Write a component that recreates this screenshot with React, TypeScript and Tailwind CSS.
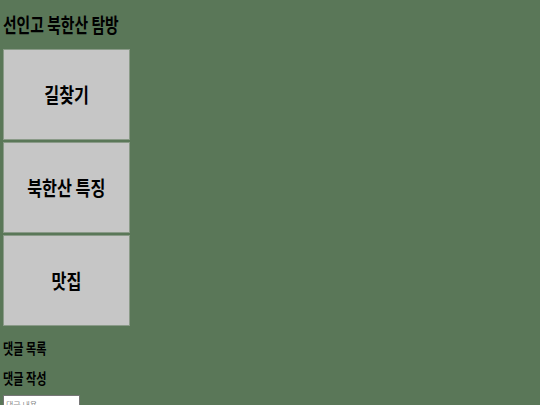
const font = { fontFamily: '"Noto Sans CJK KR", "Noto Sans", sans-serif' }

function MenuBox({ label }: { label: string }) {
  return (
    <div className="w-[127px] h-[91px] flex items-center justify-center bg-[#c6c6c6] border border-[#8a9a88] text-[20px] font-bold text-black">
      <span className="inline-block whitespace-nowrap scale-x-[0.81] origin-center">{label}</span>
    </div>
  )
}

export default function App() {
  return (
    <div className="min-h-[405px] bg-[#5a7758] px-[3px] text-black" style={font}>
      <h1 className="pt-[13px] text-[20px] leading-[24px] font-bold whitespace-nowrap">
        <span className="inline-block scale-x-[0.74] origin-left">선인고 북한산 탐방</span>
      </h1>
      <div className="mt-[12px] flex flex-col gap-[2px]">
        <MenuBox label="길찾기" />
        <MenuBox label="북한산 특징" />
        <MenuBox label="맛집" />
      </div>
      <h2 className="mt-[13px] text-[15px] leading-[18px] font-bold whitespace-nowrap">
        <span className="inline-block scale-x-[0.74] origin-left">댓글 목록</span>
      </h2>
      <h2 className="mt-[12px] text-[15px] leading-[18px] font-bold whitespace-nowrap">
        <span className="inline-block scale-x-[0.74] origin-left">댓글 작성</span>
      </h2>
      <input
        className="mt-[8px] block w-[77px] h-[18px] bg-white border border-[#767676] text-[8px] px-[2px] outline-none"
        placeholder="댓글 내용"
      />
    </div>
  )
}
